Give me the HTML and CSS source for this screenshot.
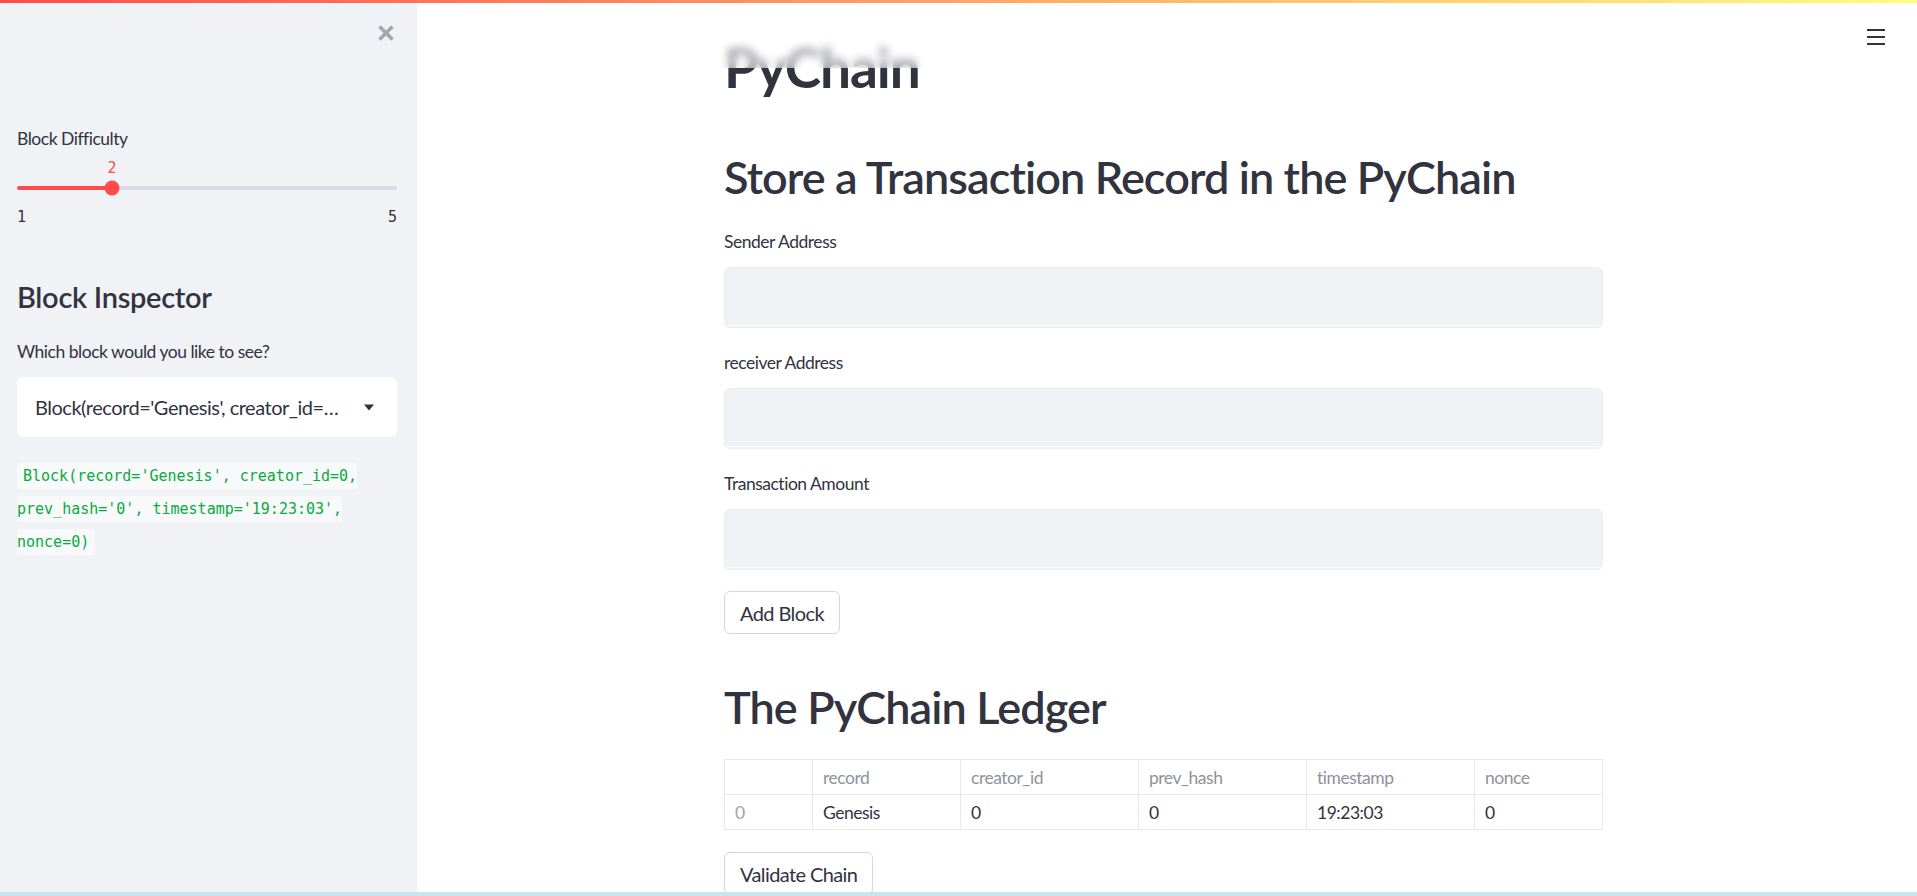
FILE: index.html
```html
<!DOCTYPE html>
<html lang="en">
<head>
<meta charset="utf-8">
<title>PyChain</title>
<link rel="stylesheet" href="styles.css">
</head>
<body>
<div class="decoration"></div>
<div class="app">
  <aside class="sidebar">
    <div class="sidebar-top">
      <svg class="close-icon" width="18" height="18" viewBox="0 0 18 18" aria-label="Close sidebar">
        <path d="M2.5 2.5 L15.5 15.5 M15.5 2.5 L2.5 15.5" stroke="#a3a6b0" stroke-width="3.6" stroke-linecap="butt" fill="none"/>
      </svg>
    </div>
    <div class="widget-label first">Block Difficulty</div>
    <div class="slider">
      <div class="slider-value-row"><span class="slider-value" style="left:25%">2</span></div>
      <div class="slider-track-row">
        <div class="slider-track">
          <div class="slider-fill" style="width:25%"></div>
          <div class="slider-thumb" style="left:25%"></div>
        </div>
      </div>
      <div class="slider-ticks"><span>1</span><span>5</span></div>
    </div>
    <h2 class="sidebar-heading">Block Inspector</h2>
    <div class="widget-label">Which block would you like to see?</div>
    <div class="select">
      <span class="select-text">Block(record='Genesis', creator_id=0, prev_hash='0', timestamp='19:23:03', nonce=0)</span>
      <svg class="select-caret" width="12" height="7" viewBox="0 0 12 7"><polygon points="1,0.5 11,0.5 6,6.5" fill="#31333f"/></svg>
    </div>
    <p class="code-para"><code>Block(record='Genesis', creator_id=0, prev_hash='0', timestamp='19:23:03', nonce=0)</code></p>
  </aside>
  <main class="main">
    <header class="main-header">
      <div class="hamburger"><span></span><span></span><span></span></div>
    </header>
    <div class="block-container">
      <h1 class="title">PyChain</h1>
      <h2 class="section-heading">Store a Transaction Record in the PyChain</h2>
      <div class="widget-label main-label">Sender Address</div>
      <div class="text-input"><input class="text-input-field" type="text"></div>
      <div class="widget-label main-label">receiver Address</div>
      <div class="text-input"><input class="text-input-field" type="text"></div>
      <div class="widget-label main-label">Transaction Amount</div>
      <div class="text-input"><input class="text-input-field" type="text"></div>
      <button class="btn add-btn">Add Block</button>
      <h2 class="section-heading ledger-heading">The PyChain Ledger</h2>
      <table class="ledger">
        <colgroup>
          <col class="c-idx"><col class="c-record"><col class="c-creator"><col class="c-prev"><col class="c-time"><col class="c-nonce">
        </colgroup>
        <thead>
          <tr><th></th><th>record</th><th>creator_id</th><th>prev_hash</th><th>timestamp</th><th>nonce</th></tr>
        </thead>
        <tbody>
          <tr><td class="idx">0</td><td>Genesis</td><td>0</td><td>0</td><td>19:23:03</td><td>0</td></tr>
        </tbody>
      </table>
      <button class="btn validate-btn">Validate Chain</button>
    </div>
  </main>
</div>
<div class="bottom-strip"></div>
</body>
</html>
```
FILE: styles.css
```css
* { box-sizing: border-box; }
html, body { margin: 0; padding: 0; height: 100%; }
body {
  font-family: "Source Sans Pro", Lato, "Liberation Sans", sans-serif;
  color: #31333f;
  background: #ffffff;
  overflow: hidden;
  letter-spacing: -0.03em;
}
.decoration {
  position: fixed; top: 0; left: 0; right: 0; height: 3px; z-index: 20;
  background: linear-gradient(90deg, #ff4b4b 0%, #fffd80 100%);
}
.bottom-strip {
  position: fixed; left: 0; right: 0; bottom: 0; height: 4px; z-index: 20;
  background: #c9e4ec;
}
.app { display: flex; height: 100vh; }

/* Sidebar */
.sidebar {
  width: 417px; flex: none; background: #f0f2f6;
  padding: 0 20px 0 17px;
}
.sidebar-top {
  height: 66px; display: flex; justify-content: flex-end; align-items: center;
  padding-right: 2px;
}
.close-icon { display: block; }
.widget-label { font-size: 17.5px; line-height: 22px; }
.widget-label.first { margin-top: 62px; }
.slider { padding-top: 10px; }
.slider-value-row { position: relative; height: 16px; }
.slider-value {
  position: absolute; top: 0; transform: translateX(-50%);
  font-family: "DejaVu Sans Mono", "Liberation Mono", monospace;
  font-size: 15px; line-height: 16px; color: #ff4b4b; letter-spacing: 0;
}
.slider-track-row { height: 16px; margin-top: 4px; display: flex; align-items: center; }
.slider-track {
  position: relative; width: 100%; height: 4px; border-radius: 2px; background: #d9dde6;
}
.slider-fill { height: 100%; border-radius: 2px; background: #ff4b4b; }
.slider-thumb {
  position: absolute; top: 50%; width: 15px; height: 15px; border-radius: 50%;
  background: #ff4b4b; transform: translate(-50%, -50%);
}
.slider-ticks {
  margin-top: 12px; display: flex; justify-content: space-between;
  font-family: "DejaVu Sans Mono", "Liberation Mono", monospace;
  font-size: 15px; line-height: 18px; color: #31333f; letter-spacing: 0;
}
.sidebar-heading {
  margin: 51px 0 0; font-size: 29px; line-height: 40px; font-weight: 600; letter-spacing: -0.01em;
}
.sidebar-heading + .widget-label { margin-top: 24px; }
.select {
  margin-top: 14px; height: 60px; background: #ffffff; border-radius: 6px;
  display: flex; align-items: center; padding: 0 22px 0 18px; gap: 14px;
}
.select-text {
  flex: 1; min-width: 0; font-size: 20px; white-space: nowrap; overflow: hidden; text-overflow: ellipsis;
}
.select-caret { flex: none; display: block; }
.code-para { margin: 22px 0 0; line-height: 32px; letter-spacing: 0; }
.code-para code {
  font-family: "DejaVu Sans Mono", "Liberation Mono", monospace;
  font-size: 15px; color: #09ab3b; background: #f8f9fb;
  padding: 4px 6px; border-radius: 4px;
}

/* Main */
.main { flex: 1; position: relative; padding-right: 7px; overflow: hidden; }
.main-header {
  position: absolute; top: 0; left: 0; right: 0; height: 68px; z-index: 5;
  background: rgba(255, 255, 255, 0.55);
  backdrop-filter: blur(4px);
  display: flex; justify-content: flex-end; align-items: flex-start;
  padding: 29px 32px 0 0;
}
.hamburger { width: 18px; display: flex; flex-direction: column; gap: 5px; }
.hamburger span { display: block; height: 2px; background: #31333f; }
.block-container { width: 879px; margin: 0 auto; padding-top: 34px; }
.title { margin: 0; font-size: 55px; line-height: 66px; font-weight: 700; letter-spacing: -0.02em; }
.section-heading { margin: 50px 0 0; font-size: 45px; line-height: 54px; font-weight: 600; letter-spacing: -0.02em; }
.main-label { margin-top: 24px; }
.section-heading + .main-label { margin-top: 27px; }
.text-input {
  margin-top: 14px; height: 61px; border: 1px solid #eceef3; border-radius: 6px;
  background: #f0f2f6; overflow: hidden;
}
.text-input-field {
  display: block; width: 100%; height: 58px; margin: 0; padding: 0 16px;
  border: none; border-bottom: 1px solid #fafbfc; background: #f0f2f6; outline: none;
  font: inherit; font-size: 20px; color: #31333f;
}
.btn {
  display: block; height: 43px; padding: 0 15px; margin: 0;
  background: #ffffff; border: 1px solid #d5d6d9; border-radius: 6px;
  font-family: inherit; font-size: 20px; color: #31333f; letter-spacing: -0.03em;
}
.add-btn { margin-top: 21px; }
.ledger-heading { margin-top: 46px; }
.ledger {
  margin-top: 25px; width: 100%; border-collapse: collapse; table-layout: fixed;
  font-size: 17.5px;
}
.ledger th, .ledger td {
  border: 1px solid #e6e8ee; height: 35px; padding: 0 10px; text-align: left;
  font-weight: 400; white-space: nowrap;
}
.ledger th { color: #8f929c; }
.ledger td.idx { color: #a0a3ab; }
.c-idx { width: 88px; }
.c-record { width: 148px; }
.c-creator { width: 178px; }
.c-prev { width: 168px; }
.c-time { width: 168px; }
.validate-btn { margin-top: 22px; }
```
